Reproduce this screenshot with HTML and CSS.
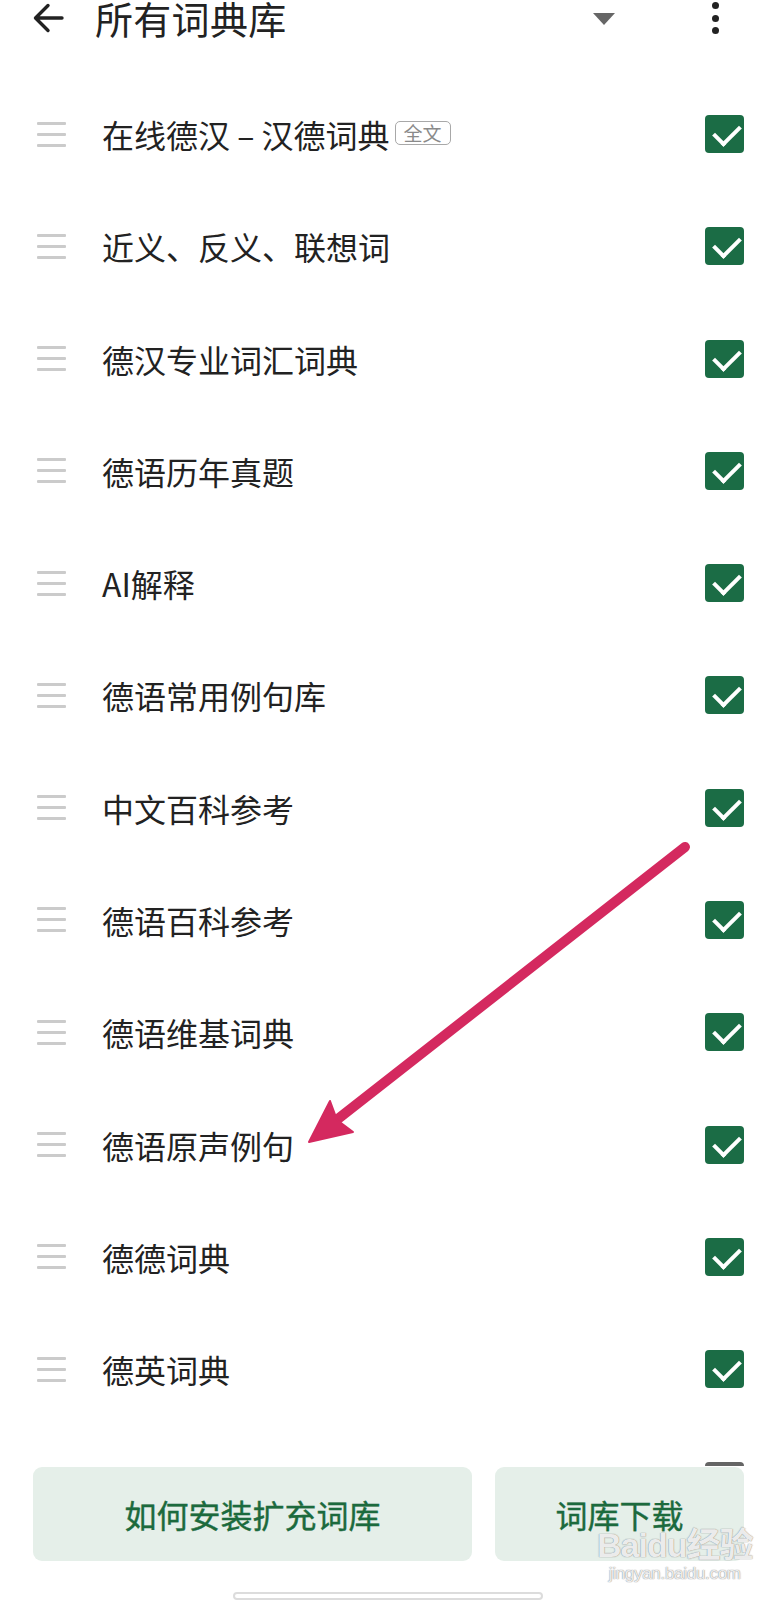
FILE: index.html
```html
<!DOCTYPE html>
<html lang="zh-CN">
<head>
<meta charset="utf-8">
<title>所有词典库</title>
<link rel="stylesheet" href="styles.css">
</head>
<body>
<div class="screen">
  <header class="topbar">
    <svg class="back" width="32" height="32" viewBox="0 0 32 32"><path d="M30 16H4M16 3.5L3.5 16 16 28.5" fill="none" stroke="#222" stroke-width="3.4" stroke-linecap="round" stroke-linejoin="round"/></svg>
    <h1 class="title">所有词典库</h1>
    <span class="caret"></span>
    <span class="kebab"><i></i><i></i><i></i></span>
  </header>

  <ul class="list">
    <li class="row"><span class="handle"><i></i><i></i><i></i></span><span class="name">在线德汉 – 汉德词典<span class="badge">全文</span></span><span class="check"></span></li>
    <li class="row"><span class="handle"><i></i><i></i><i></i></span><span class="name">近义、反义、联想词</span><span class="check"></span></li>
    <li class="row"><span class="handle"><i></i><i></i><i></i></span><span class="name">德汉专业词汇词典</span><span class="check"></span></li>
    <li class="row"><span class="handle"><i></i><i></i><i></i></span><span class="name">德语历年真题</span><span class="check"></span></li>
    <li class="row"><span class="handle"><i></i><i></i><i></i></span><span class="name">AI解释</span><span class="check"></span></li>
    <li class="row"><span class="handle"><i></i><i></i><i></i></span><span class="name">德语常用例句库</span><span class="check"></span></li>
    <li class="row"><span class="handle"><i></i><i></i><i></i></span><span class="name">中文百科参考</span><span class="check"></span></li>
    <li class="row"><span class="handle"><i></i><i></i><i></i></span><span class="name">德语百科参考</span><span class="check"></span></li>
    <li class="row"><span class="handle"><i></i><i></i><i></i></span><span class="name">德语维基词典</span><span class="check"></span></li>
    <li class="row"><span class="handle"><i></i><i></i><i></i></span><span class="name">德语原声例句</span><span class="check"></span></li>
    <li class="row"><span class="handle"><i></i><i></i><i></i></span><span class="name">德德词典</span><span class="check"></span></li>
    <li class="row"><span class="handle"><i></i><i></i><i></i></span><span class="name">德英词典</span><span class="check"></span></li>
    <li class="row"><span class="handle"><i></i><i></i><i></i></span><span class="name">德语动词变位</span><span class="check off"></span></li>
  </ul>

  <div class="bottombar">
    <div class="actions">
      <button class="btn">如何安装扩充词库</button>
      <button class="btn">词库下载</button>
    </div>
    <div class="homebar"></div>
  </div>

  <svg class="annot" width="776" height="1600" viewBox="0 0 776 1600">
    <line x1="685" y1="847" x2="334" y2="1122" stroke="#d4295f" stroke-width="10" stroke-linecap="round"/>
    <polygon points="309,1142 330,1101 337,1120 353,1132" fill="#d4295f" stroke="#d4295f" stroke-width="2" stroke-linejoin="round"/>
  </svg>

  <div class="watermark">
    <div class="wm-main">Baidu经验</div>
    <div class="wm-sub">jingyan.baidu.com</div>
  </div>
</div>
</body>
</html>
```

FILE: styles.css
```css
* { box-sizing: border-box; }

html, body {
  margin: 0;
  padding: 0;
  background: #fff;
}

body {
  width: 776px;
  height: 1600px;
  overflow: hidden;
  font-family: "Noto Sans CJK SC", "Noto Sans", sans-serif;
  color: #222;
}

.screen {
  position: relative;
  width: 776px;
  height: 1600px;
  overflow: hidden;
}

.topbar {
  height: 36px;
  display: flex;
  align-items: center;
  padding: 0 0 0 32px;
}

.back {
  display: block;
  flex: none;
}

.title {
  margin: 0 0 0 31px;
  font-size: 38px;
  font-weight: 400;
  line-height: 36px;
  letter-spacing: 0.3px;
  color: #222;
  flex: 1;
}

.caret {
  width: 0;
  height: 0;
  border-left: 11px solid transparent;
  border-right: 11px solid transparent;
  border-top: 12px solid #666;
  margin-right: 97px;
  margin-top: 2px;
}

.kebab {
  display: flex;
  flex-direction: column;
  gap: 5.5px;
  margin-right: 57px;
}

.kebab i {
  display: block;
  width: 7px;
  height: 7px;
  border-radius: 50%;
  background: #222;
}

.list {
  list-style: none;
  margin: 42px 0 0;
  padding: 0;
}

.row {
  height: 112.27px;
  display: flex;
  align-items: center;
  padding: 0 32px 0 37px;
}

.handle {
  width: 29px;
  display: flex;
  flex-direction: column;
  gap: 8px;
  flex: none;
}

.handle i {
  display: block;
  height: 3px;
  background: #cbcbcb;
  border-radius: 1px;
}

.name {
  flex: 1;
  margin-left: 36px;
  font-size: 32px;
  line-height: 40px;
  display: flex;
  align-items: center;
  white-space: nowrap;
}

.badge {
  margin-left: 5px;
  margin-top: -2px;
  font-size: 19px;
  line-height: 22px;
  padding: 0 8px;
  color: #8a8a8a;
  border: 1px solid #a8a8a8;
  border-radius: 5px;
}

.check {
  position: relative;
  width: 39px;
  height: 38px;
  border-radius: 4px;
  background: #1b6c45;
  flex: none;
}

.check::after {
  content: "";
  position: absolute;
  left: 9px;
  top: 5px;
  width: 22px;
  height: 12px;
  border-left: 4px solid #fff;
  border-bottom: 4px solid #fff;
  transform: translate(0, 4px) rotate(-45deg);
  transform-origin: center;
}

.check.off {
  background: #656565;
}

.bottombar {
  position: absolute;
  left: 0;
  right: 0;
  top: 1466px;
  bottom: 0;
  background: #fff;
  display: flex;
  flex-direction: column;
  align-items: center;
}

.actions {
  width: 100%;
  display: grid;
  grid-template-columns: 1fr 249px;
  gap: 23px;
  padding: 1px 32px 0 33px;
}

.btn {
  height: 94px;
  border: none;
  border-radius: 9px;
  background: #e5efe9;
  color: #1c6a3d;
  font-family: "Noto Sans CJK SC", "Noto Sans", sans-serif;
  font-size: 32px;
  font-weight: 400;
  padding: 0;
  -webkit-text-stroke: 0.4px #1c6a3d;
}

.homebar {
  margin-top: 31px;
  width: 310px;
  height: 16px;
  border: 2px solid #dcdcdc;
  border-radius: 8px;
}

.annot {
  position: absolute;
  left: 0;
  top: 0;
  pointer-events: none;
}

.watermark {
  position: absolute;
  left: 597px;
  top: 1526px;
  color: rgba(255, 255, 255, 0.85);
  text-shadow: 0 0 1px rgba(120, 120, 120, 0.7), 0 0 1px rgba(120, 120, 120, 0.7);
  font-family: "Liberation Sans", "Noto Sans CJK SC", sans-serif;
  text-align: center;
  pointer-events: none;
}

.wm-main {
  font-size: 34px;
  line-height: 38px;
  font-weight: 700;
  letter-spacing: -1px;
}

.wm-sub {
  font-size: 17px;
  line-height: 20px;
  letter-spacing: -0.3px;
}
```
